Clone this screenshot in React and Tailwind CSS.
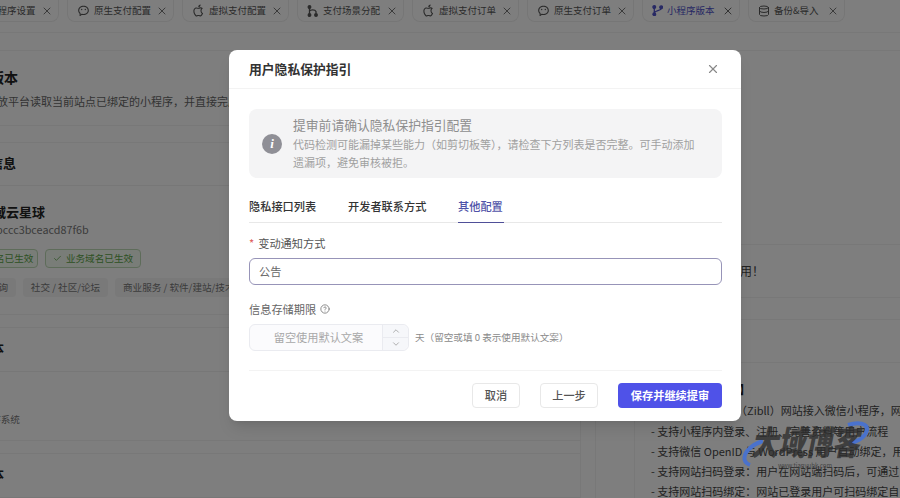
import { X, Check, ChevronUp, ChevronDown, Database, CircleHelp } from "lucide-react";
import { RiWechat2Line, RiAppleLine } from "react-icons/ri";

const font = { fontFamily: '"Noto Sans CJK SC", "Noto Sans", sans-serif' };

function SceneIcon() {
  return (
    <svg width="12" height="12" viewBox="0 0 12 12" fill="none" stroke="currentColor" strokeWidth="1.3">
      <path d="M2.5 3v6M2.5 6c1-1.600 5.500-1.800 6.500 0.500v2" />
      <circle cx="2.500" cy="2" r="1.300" fill="currentColor" />
      <circle cx="2.500" cy="10" r="1.300" fill="currentColor" />
      <circle cx="9" cy="10" r="1.300" fill="currentColor" />
    </svg>
  );
}

function BranchIcon() {
  return (
    <svg width="11" height="11" viewBox="0 0 12 12" fill="none" stroke="currentColor" strokeWidth="1.400">
      <path d="M2.500 3v6M10 3.500c0 3-6.500 2-7.500 5" />
      <circle cx="2.500" cy="2.200" r="1.500" fill="currentColor" />
      <circle cx="2.500" cy="10" r="1.500" fill="currentColor" />
      <circle cx="10" cy="2.500" r="1.500" fill="currentColor" />
    </svg>
  );
}

const tabs = [
  { label: "小程序设置", w: "w-[107px]", icon: <span className="w-[22px]" /> },
  { label: "原生支付配置", w: "w-[107px]", icon: <RiWechat2Line size={13} /> },
  { label: "虚拟支付配置", w: "w-[107px]", icon: <RiAppleLine size={13} /> },
  { label: "支付场景分配", w: "w-[107px]", icon: <SceneIcon /> },
  { label: "虚拟支付订单", w: "w-[107px]", icon: <RiAppleLine size={13} /> },
  { label: "原生支付订单", w: "w-[107px]", icon: <RiWechat2Line size={13} /> },
  { label: "小程序版本", w: "w-[98px]", icon: <BranchIcon />, active: true },
  { label: "备份&导入", w: "w-[97px]", icon: <Database size={12} /> },
];

const intro = [
  "- 支持小程序内登录、注册、完善资料等用户流程",
  "- 支持微信 OpenID 与 WordPress 用户自动绑定，用",
  "- 支持网站扫码登录：用户在网站端扫码后，可通过",
  "- 支持网站扫码绑定：网站已登录用户可扫码绑定自",
];

function Watermark() {
  return (
    <div className="absolute left-[738px] top-[418px] w-[134px] h-[56px]">
      <svg width="134" height="56" viewBox="0 0 134 56" fill="none" stroke="#4a72cc" strokeWidth="4" className="absolute inset-0">
        <path d="M12 47c-8-3-8-12 4-20c3-2 6-3 9-4" />
        <path d="M110 7c10-3 20-2 19 5c-1 6-8 11-18 14" />
      </svg>
      <p className="relative mt-[3px] text-center text-[27px] leading-[40px] font-black italic text-[#2e2e2e]/80 whitespace-nowrap scale-y-125">大域博客</p>
      <p className="relative mt-[1px] text-center text-[6px] leading-[8px] text-[#444]">www.tianyubk.com</p>
    </div>
  );
}

export default function App() {
  return (
    <div style={font} className="relative w-[900px] h-[498px] overflow-hidden bg-[#fdfdfd]">
      {/* page behind the dialog */}
      <div className="flex gap-2 h-[33px] -ml-[48px] border-b border-[#f0f0f0]">
        {tabs.map((t) => (
          <div
            key={t.label}
            className={`${t.w} h-[22px] shrink-0 flex items-center gap-[3px] pl-[9px] pr-[5px] rounded-b-lg border border-t-0 border-[#ececec] text-[9.500px] ${t.active ? "text-[#4f52c8]" : "text-[#555]"}`}
          >
            {t.icon}
            <span className="ml-[1px] whitespace-nowrap">{t.label}</span>
            <X size={12} className={`ml-auto ${t.active ? "text-[#666]" : "text-[#777]"}`} />
          </div>
        ))}
      </div>

      <div className="flex gap-[14px] mt-[17px] h-[448px]">
        <div className="w-[581px] shrink-0 border-t border-r border-[#f0f0f0]">
          <div className="h-[75px] border-b border-[#f0f0f0] pt-[14px]">
            <h1 className="-ml-[52px] text-[14px] leading-6 font-bold text-[#222]">小程序版本</h1>
            <p className="-ml-[36px] mt-[2px] text-[11px] leading-5 text-[#666] whitespace-nowrap">微信开放平台读取当前站点已绑定的小程序，并直接完成提审</p>
          </div>
          <div className="h-[17px] border-b border-[#f0f0f0]" />
          <div className="h-[43px] border-b border-[#eee] pb-[3px] flex items-center">
            <h2 className="-ml-[36px] text-[13px] font-bold text-[#222] whitespace-nowrap">基本信息</h2>
          </div>
          <div className="h-[129px] border-b border-[#f0f0f0] pt-[17px]">
            <p className="-ml-[20px] text-[13px] leading-[18px] font-bold text-[#222] whitespace-nowrap">大域云星球</p>
            <p className="-ml-[18px] text-[10.800px] leading-4 text-[#777] whitespace-nowrap">wxbccc3bceacd87f6b</p>
            <div className="-ml-[61px] flex gap-[7px] mt-[12px]">
              <span className="h-[19px] w-[99px] shrink-0 flex items-center justify-center rounded border border-[#bcd9b4] bg-[#f3faf0] text-[9.600px] text-[#5aa447] whitespace-nowrap">
                <Check size={9} className="mr-1" />
                服务器域名已生效
              </span>
              <span className="h-[19px] w-[96px] shrink-0 flex items-center justify-center rounded border border-[#bcd9b4] bg-[#f3faf0] text-[9.600px] text-[#5aa447] whitespace-nowrap">
                <Check size={9} className="mr-1" />
                业务域名已生效
              </span>
            </div>
            <div className="-ml-[19px] flex gap-[7px] mt-[10px]">
              <span className="h-[19px] w-[35px] shrink-0 flex items-center justify-center rounded bg-[#f2f2f2] text-[9.600px] text-[#777] whitespace-nowrap">查询</span>
              <span className="h-[19px] w-[85px] shrink-0 flex items-center justify-center rounded bg-[#f2f2f2] text-[9.600px] text-[#777] whitespace-nowrap">社交 / 社区/论坛</span>
              <span className="h-[19px] px-2 flex items-center rounded bg-[#f2f2f2] text-[9.600px] text-[#777] whitespace-nowrap">商业服务 / 软件/建站/技术开发</span>
            </div>
          </div>
          <div className="h-[13px] border-b border-[#f0f0f0]" />
          <div className="h-[44px] border-b border-[#eee] pb-[3px] flex items-center">
            <h2 className="-ml-[48px] text-[13px] font-bold text-[#222] whitespace-nowrap">线上版本</h2>
          </div>
          <div className="h-[69px] border-b border-[#f0f0f0] flex items-end pb-[14px]">
            <p className="-ml-[28px] text-[9.600px] text-[#777] whitespace-nowrap">小程序系统</p>
          </div>
          <div className="h-[13px] border-b border-[#f0f0f0]" />
          <div className="h-[44px] border-b border-[#eee] pb-[3px] flex items-center">
            <h2 className="-ml-[48px] text-[13px] font-bold text-[#222] whitespace-nowrap">体验版本</h2>
          </div>
        </div>

        <div className="flex-1 min-w-0 border-t border-l border-[#f0f0f0] overflow-hidden">
          <div className="h-[194px] border-b border-[#f0f0f0]" />
          <div className="h-[53px] border-b border-[#f0f0f0] flex items-center pl-[144px]">
            <p className="text-[12px] text-[#444] whitespace-nowrap">用！</p>
          </div>
          <div className="h-[22px] border-b border-[#f0f0f0]" />
          <div className="h-[43px] border-b border-[#f0f0f0]" />
          <div className="ml-[38px] h-[200px] border-l border-[#f0f0f0] pl-[16px] pt-[17px] text-[11px] leading-[20.300px] text-[#444] whitespace-nowrap">
            <p className="ml-[4px] font-bold text-[12px] text-[#222]">【插件功能介绍】</p>
            <p className="-ml-[3px]">插件帮助子比主题（Zibll）网站接入微信小程序，网站</p>
            {intro.map((line) => (
              <p key={line}>{line}</p>
            ))}
          </div>
        </div>
      </div>

      {/* overlay + dialog */}
      <div className="absolute inset-0 bg-black/50 pt-[50px] pl-[229px]">
        <div className="w-[512px] h-[371px] bg-white rounded-lg shadow-lg">
          <div className="h-[39px] flex items-center justify-between pl-5 pr-[21px] border-b border-[#f3f3f3]">
            <h3 className="text-[12.800px] font-bold text-[#333]">用户隐私保护指引</h3>
            <X size={14} className="text-[#888]" />
          </div>

          <div className="pl-5 pr-[19px] pt-5">
            <div className="h-[69px] rounded-lg bg-[#f4f4f5] flex items-center pl-[13px] pr-5">
              <span className="w-5 h-5 rounded-full bg-[#8f8f96] flex items-center justify-center shrink-0">
                <i className="text-white text-[13px] font-bold leading-none" style={{ fontFamily: '"Liberation Serif", serif' }}>i</i>
              </span>
              <div className="ml-[11px] -mt-[2px]">
                <p className="text-[12.800px] leading-5 text-[#8e8e8e]">提审前请确认隐私保护指引配置</p>
                <p className="text-[11px] leading-[18px] text-[#a0a0a0]">代码检测可能漏掉某些能力（如剪切板等），请检查下方列表是否完整。可手动添加遗漏项，避免审核被拒。</p>
              </div>
            </div>

            <div className="flex h-[26px] mt-[19px] border-b border-[#e8e8e8] text-[11.200px] font-medium text-[#333]">
              <span className="w-[99px] leading-[19px]">隐私接口列表</span>
              <span className="w-[110px] leading-[19px]">开发者联系方式</span>
              <span className="w-[46px] h-[26px] leading-[19px] text-[#4f52a8] border-b-[1.500px] border-[#4f4f98]">其他配置</span>
            </div>

            <p className="mt-[11px] text-[11.200px] leading-[18px] text-[#555]">
              <span className="text-[#e06060] mr-1">*</span>变动通知方式
            </p>
            <div className="mt-[6px] h-[27px] rounded-md border border-[#9794b8] flex items-center px-[9px] text-[11.200px] text-[#666]">公告</div>

            <p className="mt-[15px] text-[11.200px] leading-[18px] text-[#666] flex items-center gap-1">
              信息存储期限
              <CircleHelp size={10} className="text-[#777]" />
            </p>
            <div className="mt-[6px] flex items-center">
              <div className="w-[160px] h-[27px] rounded-md border border-[#eaebf0] bg-[#fbfbfd] flex">
                <span className="flex-1 pl-[5px] text-center text-[11.200px] leading-[25px] text-[#a8a8a8]">留空使用默认文案</span>
                <div className="w-[26px] border-l border-[#eaebf0] bg-[#f6f7fa] rounded-r-md flex flex-col text-[#a0a0a0]">
                  <span className="flex-1 flex items-center justify-center border-b border-[#eaebf0]">
                    <ChevronUp size={10} />
                  </span>
                  <span className="flex-1 flex items-center justify-center">
                    <ChevronDown size={10} />
                  </span>
                </div>
              </div>
              <span className="ml-[6px] text-[9.600px] text-[#8a8a8a] whitespace-nowrap">天（留空或填 0 表示使用默认文案）</span>
            </div>

            <div className="mt-[19px] border-t border-[#f3f3f3] pt-[12px] flex justify-end">
              <button className="w-[48px] h-[25px] rounded border border-[#e8e8e8] text-[11.200px] font-medium text-[#555]">取消</button>
              <button className="ml-5 w-[58px] h-[25px] rounded border border-[#e8e8e8] text-[11.200px] font-medium text-[#555]">上一步</button>
              <button className="ml-5 w-[104px] h-[25px] rounded bg-[#4f52e8] text-[11.200px] font-bold text-white">保存并继续提审</button>
            </div>
          </div>
        </div>
      </div>

      <Watermark />
    </div>
  );
}
